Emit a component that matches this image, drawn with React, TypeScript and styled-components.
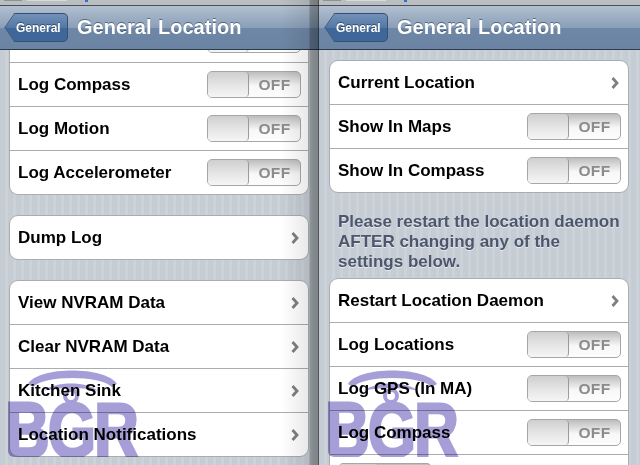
import React from 'react'
import styled, { createGlobalStyle } from 'styled-components'

const Global = createGlobalStyle`
  html, body { margin: 0; padding: 0; background: #c5ccd4; }
  body { width: 640px; height: 465px; overflow: hidden; font-family: "Liberation Sans", Arial, sans-serif; }
`

const Shots = styled.div`
  display: flex;
  width: 640px;
  height: 465px;
  overflow: hidden;
`

const Phone = styled.div<{ $w: number; $shaded?: boolean }>`
  position: relative;
  width: ${p => p.$w}px;
  flex: none;
  height: 465px;
  overflow: hidden;
  display: flex;
  flex-direction: column;
  background: repeating-linear-gradient(90deg, #c5ccd4 0 5px, #cbd2d8 5px 8px);
  ${p => p.$shaded && `
    &::after {
      content: '';
      position: absolute;
      top: 0;
      right: 0;
      bottom: 0;
      width: 38px;
      z-index: 3;
      pointer-events: none;
      background: linear-gradient(90deg, rgba(0, 0, 0, 0) 0, rgba(0, 0, 0, .09) 28px, rgba(0, 0, 0, .3) 29px, rgba(0, 0, 0, .36) 37px, rgba(0, 0, 0, .6) 37px);
    }
  `}
`

const StatusBar = styled.div`
  height: 5px;
  flex: none;
  border-bottom: 1px solid #4a4f55;
  background-color: #b9bfc0;
  background-repeat: no-repeat;
  background-image:
    linear-gradient(#8d9294, #8d9294),
    linear-gradient(#d6dadb, #d6dadb),
    linear-gradient(#2f6fd0, #2f6fd0);
  background-size: 18px 1px, 40px 1px, 3px 2px;
  background-position: 4px 0, 27px 0, 85px 0;
`

const NavBar = styled.div<{ $inset: number }>`
  height: 43px;
  flex: none;
  display: flex;
  align-items: center;
  padding-left: ${p => p.$inset}px;
  gap: 9px;
  background: linear-gradient(#b2c0d0 0, #8a9fb8 50%, #6e87a6 52%, #6c84a3 100%);
  border-bottom: 1px solid #2d3a4c;
  box-sizing: content-box;
  z-index: 1;
`

const BackButton = styled.div`
  position: relative;
  height: 29px;
  width: 54px;
  box-sizing: border-box;
  display: flex;
  align-items: center;
  padding-left: 2px;
  color: #fff;
  font-size: 12px;
  font-weight: 700;
  text-shadow: 0 -1px 0 rgba(0, 0, 0, .4);
  background: linear-gradient(#7391b8 0, #5478a6 50%, #3f6698 52%, #3f6799 100%);
  border: 1px solid #38506f;
  border-left: none;
  border-radius: 0 5px 5px 0;
  &::before {
    content: '';
    position: absolute;
    left: -10.5px;
    top: 3px;
    width: 20px;
    height: 20px;
    transform: scaleX(.67) rotate(45deg);
    background: linear-gradient(135deg, #7391b8 0, #5478a6 50%, #3f6698 52%, #3f6799 100%);
    border-left: 1px solid #38506f;
    border-bottom: 1px solid #38506f;
  }
  span { position: relative; z-index: 1; }
`

const Title = styled.div`
  color: #fff;
  font-size: 20px;
  font-weight: 700;
  word-spacing: 1px;
  text-shadow: 0 -1px 0 rgba(40, 55, 75, .6);
`

const Body = styled.div<{ $pad: string }>`
  flex: 1;
  min-height: 0;
  padding: ${p => p.$pad};
`

const Card = styled.div<{ $flat?: boolean; $after: number }>`
  background: #fff;
  border: 1px solid #a9adb2;
  border-top: ${p => (p.$flat ? 'none' : '1px solid #a9adb2')};
  border-radius: ${p => (p.$flat ? '0 0 9px 9px' : '9px')};
  margin-bottom: ${p => p.$after}px;
  overflow: hidden;
`

const Row = styled.div`
  height: 43px;
  box-sizing: content-box;
  display: flex;
  align-items: center;
  justify-content: space-between;
  padding: 0 7px 0 8px;
  color: #000;
  font-size: 17px;
  font-weight: 700;
  & + & { border-top: 1px solid #a9adb2; }
`

const PartialRow = styled(Row)`
  align-items: flex-end;
  justify-content: flex-end;
  height: 12px;
  overflow: hidden;
  > div { margin-bottom: 9px; flex: none; }
`

const Toggle = styled.div`
  width: 94px;
  height: 27px;
  box-sizing: border-box;
  display: flex;
  border: 1px solid #a6a6a6;
  border-radius: 5px;
  overflow: hidden;
  background: linear-gradient(#bdbdbd 0, #ececec 45%, #f7f7f7 55%, #fdfdfd 100%);
`

const Knob = styled.div`
  width: 40px;
  flex: none;
  border-right: 1px solid #9a9a9a;
  border-radius: 0 4px 4px 0;
  background: linear-gradient(#cfcfcf 0, #e4e4e4 50%, #f5f5f5 100%);
`

const OffLabel = styled.div`
  flex: 1;
  text-align: center;
  line-height: 25px;
  color: #8b8b8b;
  font-size: 15.5px;
  font-weight: 700;
  letter-spacing: .4px;
`

const Note = styled.div`
  padding: 0 0 6px 9px;
  margin-top: -2px;
  color: #4c566c;
  font-size: 17px;
  white-space: nowrap;
  line-height: 20px;
  font-weight: 700;
  text-shadow: 0 1px 0 #e6eaee;
`

const ChevronIcon = styled.svg`
  margin-right: 1px;
  flex: none;
`

const Chevron = () => (
  <ChevronIcon width="10" height="14" viewBox="0 0 10 14">
    <path d="M2.5 2 L7 7 L2.5 12" fill="none" stroke="#7f7f7f" strokeWidth="2.8" />
  </ChevronIcon>
)

const Watermark = styled.div<{ $left: number }>`
  position: absolute;
  left: ${p => p.$left}px;
  top: 369px;
  width: 132px;
  height: 88px;
  overflow: hidden;
  border-bottom-left-radius: 6px;
  mix-blend-mode: multiply;
  z-index: 2;
  pointer-events: none;
  svg { position: absolute; left: 0; top: 0; }
`

const WatermarkText = styled.div`
  position: absolute;
  left: -3px;
  top: 21px;
  color: #a69ed6;
  font-size: 78px;
  line-height: 80px;
  font-weight: 700;
  -webkit-text-stroke: 3px #a69ed6;
  transform: scaleX(.79);
  transform-origin: left top;
  letter-spacing: -2px;
`

const BgrMark = ({ left }: { left: number }) => (
  <Watermark $left={left}>
    <svg width="132" height="40" viewBox="0 0 132 40">
      <path d="M20 15 C30 -3 98 -3 109 15 L104 18 C92 6 36 6 25 18 Z" fill="#a69ed6" />
      <path d="M36 22 C46 12 80 12 90 22 C80 18 46 18 36 22 Z" fill="#a69ed6" />
      <circle cx="63" cy="27" r="6" fill="none" stroke="#a69ed6" strokeWidth="4" />
    </svg>
    <WatermarkText>BGR</WatermarkText>
  </Watermark>
)

const Nav = ({ inset }: { inset: number }) => (
  <>
    <StatusBar />
    <NavBar $inset={inset}>
      <BackButton><span>General</span></BackButton>
      <Title>General Location</Title>
    </NavBar>
  </>
)

const Off = () => (
  <Toggle>
    <Knob />
    <OffLabel>OFF</OffLabel>
  </Toggle>
)

export default function App() {
  return (
    <Shots>
      <Global />
      <Phone $w={319} $shaded>
        <Nav inset={14} />
        <Body $pad="0 10px 0 9px">
          <Card $flat $after={20}>
            <PartialRow><Off /></PartialRow>
            <Row>Log Compass<Off /></Row>
            <Row>Log Motion<Off /></Row>
            <Row>Log Accelerometer<Off /></Row>
          </Card>
          <Card $after={20}>
            <Row>Dump Log<Chevron /></Row>
          </Card>
          <Card $after={0}>
            <Row>View NVRAM Data<Chevron /></Row>
            <Row>Clear NVRAM Data<Chevron /></Row>
            <Row>Kitchen Sink<Chevron /></Row>
            <Row>Location Notifications<Chevron /></Row>
          </Card>
        </Body>
        <BgrMark left={8} />
      </Phone>
      <Phone $w={321}>
        <Nav inset={15} />
        <Body $pad="10px 11px 0 10px">
          <Card $after={21}>
            <Row>Current Location<Chevron /></Row>
            <Row>Show In Maps<Off /></Row>
            <Row>Show In Compass<Off /></Row>
          </Card>
          <Note>Please restart the location daemon<br />AFTER changing any of the<br />settings below.</Note>
          <Card $after={0}>
            <Row>Restart Location Daemon<Chevron /></Row>
            <Row>Log Locations<Off /></Row>
            <Row>Log GPS (In MA)<Off /></Row>
            <Row>Log Compass<Off /></Row>
            <Row><Off /></Row>
          </Card>
        </Body>
        <BgrMark left={9} />
      </Phone>
    </Shots>
  )
}
